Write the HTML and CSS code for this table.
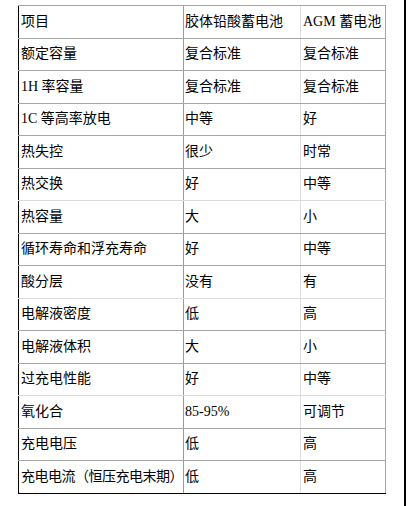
FILE: index.html
```html
<!DOCTYPE html>
<html lang="zh">
<head>
<meta charset="utf-8">
<title>胶体与AGM蓄电池对比</title>
<link rel="stylesheet" href="styles.css">
</head>
<body>
<div class="page">
  <div class="sheet">
    <table class="compare">
      <colgroup>
        <col class="c1"><col class="c2"><col class="c3">
      </colgroup>
      <tbody>
        <tr><td>项目</td><td>胶体铅酸蓄电池</td><td>AGM 蓄电池</td></tr>
        <tr><td>额定容量</td><td>复合标准</td><td>复合标准</td></tr>
        <tr><td>1H 率容量</td><td>复合标准</td><td>复合标准</td></tr>
        <tr><td>1C 等高率放电</td><td>中等</td><td>好</td></tr>
        <tr><td>热失控</td><td>很少</td><td>时常</td></tr>
        <tr class="soft"><td>热交换</td><td>好</td><td>中等</td></tr>
        <tr><td>热容量</td><td>大</td><td>小</td></tr>
        <tr><td>循环寿命和浮充寿命</td><td>好</td><td>中等</td></tr>
        <tr class="soft"><td>酸分层</td><td>没有</td><td>有</td></tr>
        <tr><td>电解液密度</td><td>低</td><td>高</td></tr>
        <tr><td>电解液体积</td><td>大</td><td>小</td></tr>
        <tr class="soft"><td>过充电性能</td><td>好</td><td>中等</td></tr>
        <tr><td>氧化合</td><td>85-95%</td><td>可调节</td></tr>
        <tr><td>充电电压</td><td>低</td><td>高</td></tr>
        <tr class="last"><td class="tight">充电电流（恒压充电末期）</td><td>低</td><td>高</td></tr>
      </tbody>
    </table>
  </div>
  <div class="edge"></div>
</div>
</body>
</html>
```
FILE: styles.css
```css
html, body {
  margin: 0;
  padding: 0;
  background: #fff;
}

.page {
  display: flex;
  width: 408px;
  height: 506px;
}

.sheet {
  flex: 1;
  padding: 5px 0 0 18px;
}

.edge {
  width: 2px;
  background: #000;
  margin-right: 2px;
}

.compare {
  border-collapse: collapse;
  table-layout: fixed;
  width: 367px;
  font-family: "Liberation Serif", "Noto Sans CJK SC", serif;
  font-size: 14px;
  color: #000;
}

.c1 { width: 165px; }
.c2 { width: 117px; }
.c3 { width: 85px; }

.compare td {
  height: 31.5px;
  padding: 0 0 0 2px;
  border-top: 1px solid #a6a6a6;
  border-bottom: 1px solid #a6a6a6;
  white-space: nowrap;
  overflow: visible;
  vertical-align: middle;
  line-height: 1;
}

.compare tr.soft td {
  border-bottom-color: #dcdcdc;
}

.compare td:first-child {
  border-left: 1px solid #000;
  padding-left: 2px;
}

.compare td:nth-child(2) {
  border-left: 1px solid #9a9a9a;
  padding-left: 1px;
}

.compare td:nth-child(3) {
  border-left: 1px solid #dedede;
  border-right: 1px solid #a6a6a6;
}

.compare tr.last td {
  border-bottom: 1px solid #000;
}

.compare td.tight {
  letter-spacing: -0.5px;
}
```
